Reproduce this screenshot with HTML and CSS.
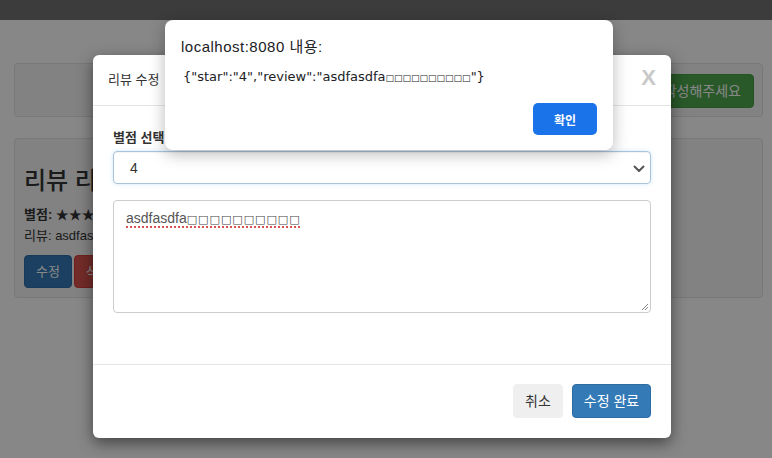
FILE: index.html
```html
<!DOCTYPE html>
<html lang="ko">
<head>
<meta charset="utf-8">
<title>리뷰</title>
<link rel="stylesheet" href="styles.css">
</head>
<body>
<div class="topbar"></div>
<main class="container">
  <section class="well well-top">
    <button class="btn btn-success">리뷰를 작성해주세요</button>
  </section>
  <section class="well well-review">
    <h2 class="review-title">리뷰 리스트</h2>
    <p class="review-line"><strong>별점:</strong> ★★★★</p>
    <p class="review-line">리뷰: asdfasdfa</p>
    <div class="btn-row">
      <button class="btn btn-primary">수정</button>
      <button class="btn btn-danger">삭제</button>
    </div>
  </section>
</main>

<div class="backdrop"></div>

<div class="modal">
  <div class="modal-header">
    <span class="modal-title">리뷰 수정</span>
    <span class="close">X</span>
  </div>
  <div class="modal-body">
    <label class="field-label">별점 선택</label>
    <div class="select">
      <span class="select-value">4</span>
      <svg class="chevron" width="12" height="8" viewBox="0 0 12 8"><path d="M1.5 1.5 L6 6 L10.5 1.5" fill="none" stroke="#555" stroke-width="2" stroke-linecap="round" stroke-linejoin="round"/></svg>
    </div>
    <div class="textarea">
      <span class="spell">asdfasdfa<span class="tofu">□□□□□□□□□□</span></span>
      <svg class="grip" width="9" height="9" viewBox="0 0 9 9"><path d="M8 2 L2 8 M8 5 L5 8" stroke="#888" stroke-width="1"/></svg>
    </div>
  </div>
  <div class="modal-footer">
    <button class="btn btn-default">취소</button>
    <button class="btn btn-primary">수정 완료</button>
  </div>
</div>

<div class="alert">
  <div class="alert-title">localhost:8080 내용:</div>
  <div class="alert-msg">{"star":"4","review":"asdfasdfa<span class="tofu-sm">□□□□□□□□□□</span>"}</div>
  <div class="alert-actions">
    <button class="alert-ok">확인</button>
  </div>
</div>
</body>
</html>
```
FILE: styles.css
```css
* { box-sizing: border-box; }
html, body { margin: 0; padding: 0; }
body {
  width: 772px;
  height: 458px;
  overflow: hidden;
  background: #fff;
  font-family: "Liberation Sans", "Noto Sans CJK KR", sans-serif;
  color: #333;
  font-size: 13px;
  position: relative;
}
.topbar {
  height: 20px;
  background: #727272;
}
.container {
  padding: 43px 9px 0 14px;
  display: flex;
  flex-direction: column;
  gap: 21px;
}
.well {
  background: #f5f5f5;
  border: 1px solid #e3e3e3;
  border-radius: 4px;
}
.well-top {
  height: 54px;
  padding: 10px 8px;
  display: flex;
  justify-content: flex-end;
}
.well-review {
  height: 160px;
  padding: 9px;
}
.btn {
  font-family: "Liberation Sans", "Noto Sans CJK KR", sans-serif;
  font-size: 14px;
  border: 1px solid transparent;
  border-radius: 4px;
  padding: 0 12px;
  height: 34px;
  line-height: 32px;
  cursor: pointer;
}
.btn-success { background: #4ea84e; border-color: #449d44; color: #fff; }
.btn-primary { background: #337ab7; border-color: #2e6da4; color: #fff; }
.btn-danger { background: #d9534f; border-color: #d43f3a; color: #fff; }
.btn-default { background: #efefef; border-color: #efefef; color: #333; }
.review-title {
  font-size: 24px;
  font-weight: 500;
  margin: 20px 0 12px;
  line-height: 26px;
}
.review-line {
  margin: 0 0 3px;
  line-height: 18px;
}
.btn-row {
  display: flex;
  gap: 2px;
  margin-top: 10px;
}
.btn-row .btn { height: 33px; line-height: 31px; font-size: 13px; padding: 0 11px; }

.backdrop {
  position: absolute;
  inset: 0;
  background: rgba(0, 0, 0, 0.47);
}

.modal {
  position: absolute;
  left: 93px;
  top: 55px;
  width: 578px;
  height: 383px;
  background: #fff;
  border-radius: 6px;
  box-shadow: 0 5px 15px rgba(0, 0, 0, 0.5);
  display: flex;
  flex-direction: column;
}
.modal-header {
  height: 51px;
  padding: 15px;
  border-bottom: 1px solid #e5e5e5;
  display: flex;
  justify-content: space-between;
  align-items: center;
}
.modal-title {
  font-size: 13px;
  line-height: 20px;
  color: #333;
}
.close {
  font-family: "Liberation Sans", sans-serif;
  font-size: 22px;
  font-weight: bold;
  color: #c9c9c9;
  margin-right: 0;
  margin-top: -4px;
}
.modal-body {
  padding: 23px 20px 0;
  flex: 1;
  display: flex;
  flex-direction: column;
}
.field-label {
  font-weight: bold;
  font-size: 13px;
  line-height: 18px;
  margin-bottom: 4px;
  color: #333;
}
.select {
  position: relative;
  height: 33px;
  border: 1px solid #a9c3dc;
  border-radius: 4px;
  box-shadow: inset 0 1px 1px rgba(0,0,0,.05), 0 0 4px rgba(102,175,233,.3);
  display: flex;
  align-items: center;
  padding-left: 16px;
  font-size: 14px;
  color: #333;
}
.chevron {
  position: absolute;
  right: 5px;
  top: 13px;
}
.textarea {
  position: relative;
  margin-top: 16px;
  height: 113px;
  border: 1px solid #ccc;
  border-radius: 4px;
  padding: 8px 12px;
  font-size: 14px;
  line-height: 18px;
  color: #555;
}
.spell {
  text-decoration: underline dotted #d9534f;
  text-underline-offset: 3px;
  text-decoration-thickness: 1.5px;
}
.tofu {
  font-family: "DejaVu Sans", sans-serif;
  font-size: 11px;
  letter-spacing: 1px;
  color: #444;
}
.grip {
  position: absolute;
  right: 1px;
  bottom: 1px;
}
.modal-footer {
  height: 74px;
  border-top: 1px solid #e5e5e5;
  padding: 19px 20px 20px;
  display: flex;
  justify-content: flex-end;
  gap: 9px;
}
.modal-footer .btn-default { width: 50px; padding: 0; }
.modal-footer .btn-primary { width: 79px; padding: 0; }

.alert {
  position: absolute;
  left: 165px;
  top: 20px;
  width: 448px;
  height: 130px;
  background: #fff;
  border-radius: 8px;
  box-shadow: 0 4px 16px rgba(0, 0, 0, 0.28);
  padding: 17px 16px 16px;
  display: flex;
  flex-direction: column;
}
.alert-title {
  font-size: 15px;
  line-height: 20px;
  letter-spacing: 0.5px;
  color: #202124;
}
.alert-msg {
  margin-top: 10px;
  margin-left: 2px;
  font-family: "DejaVu Sans", "Noto Sans CJK KR", sans-serif;
  font-size: 13px;
  line-height: 20px;
  color: #202124;
}
.tofu-sm {
  font-family: "DejaVu Sans", sans-serif;
  font-size: 9px;
  letter-spacing: 0;
}
.alert-actions {
  margin-top: 15px;
  display: flex;
  justify-content: flex-end;
}
.alert-ok {
  width: 64px;
  height: 32px;
  background: #1a73e8;
  color: #fff;
  border: none;
  border-radius: 5px;
  font-family: "Liberation Sans", "Noto Sans CJK KR", sans-serif;
  font-size: 12px;
  font-weight: bold;
}
```
